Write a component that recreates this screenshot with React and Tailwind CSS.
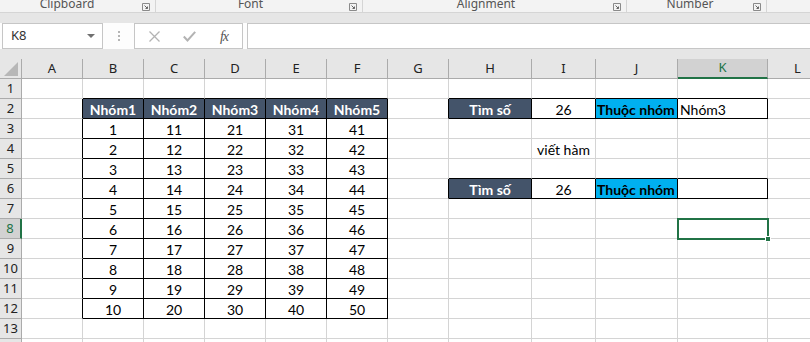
import React from 'react';

const COLS = [
  { name: 'A', w: 'w-[61px]' },
  { name: 'B', w: 'w-[61px]' },
  { name: 'C', w: 'w-[61px]' },
  { name: 'D', w: 'w-[61px]' },
  { name: 'E', w: 'w-[61px]' },
  { name: 'F', w: 'w-[61px]' },
  { name: 'G', w: 'w-[61px]' },
  { name: 'H', w: 'w-[83px]' },
  { name: 'I', w: 'w-[64px]' },
  { name: 'J', w: 'w-[82px]' },
  { name: 'K', w: 'w-[90px]' },
  { name: 'L', w: 'w-[60px]' },
];

const ROWS = [1, 2, 3, 4, 5, 6, 7, 8, 9, 10, 11, 12, 13, 14];

// nội dung các ô
const cells = {};
['B', 'C', 'D', 'E', 'F'].forEach((c, i) => {
  cells[c + 2] = { v: 'Nhóm' + (i + 1), head: true };
  for (let r = 3; r <= 12; r++) {
    cells[c + r] = { v: String(i * 10 + r - 2) };
  }
});
cells.H2 = { v: 'Tìm số', head: true };
cells.I2 = { v: '26' };
cells.J2 = { v: 'Thuộc nhóm', blue: true };
cells.K2 = { v: 'Nhóm3', left: true };
cells.I4 = { v: 'viết hàm', plain: true };
cells.H6 = { v: 'Tìm số', head: true };
cells.I6 = { v: '26' };
cells.J6 = { v: 'Thuộc nhóm', blue: true };
cells.K6 = { v: '', left: true };

const isBordered = (ci, r) => {
  if (ci < 0 || ci >= COLS.length) return false;
  if (ci >= 1 && ci <= 5 && r >= 2 && r <= 12) return true;
  if (ci >= 7 && ci <= 10 && (r === 2 || r === 6)) return true;
  return false;
};

function Launcher() {
  return (
    <svg width="8" height="8" viewBox="0 0 8 8" className="shrink-0">
      <path d="M0.5 0.5H7.5V7.5H0.5Z" fill="none" stroke="#8a8a8a" strokeWidth="1" />
      <path d="M2.5 2.5L5.5 5.5M5.5 3.5V5.5H3.5" fill="none" stroke="#666" strokeWidth="1" />
    </svg>
  );
}

function RibbonGroup({ label, w, pad }) {
  return (
    <div className={`${w} flex items-start h-[12px] border-r border-[#d5d5d5] pr-[5px]`}>
      <div className={`flex-1 text-center text-[12px] leading-[12px] -mt-[2px] text-[#555] ${pad}`}>{label}</div>
      <div className="mt-[3px]">
        <Launcher />
      </div>
    </div>
  );
}

function Cell({ ci, r }) {
  const col = COLS[ci];
  const key = col.name + r;
  const d = cells[key];
  const rightBlack = isBordered(ci, r) || isBordered(ci + 1, r);
  const bottomBlack = isBordered(ci, r) || isBordered(ci, r + 1);
  let cls = `${col.w} h-[20px] shrink-0 relative border-r border-b flex items-center `;
  cls += rightBlack ? 'border-r-black ' : 'border-r-[#d4d4d4] ';
  cls += bottomBlack ? 'border-b-black ' : 'border-b-[#d4d4d4] ';
  if (d && d.head) cls += 'bg-[#44546a] text-white font-bold justify-center ';
  else if (d && d.blue) cls += 'bg-[#00b0f0] text-black font-bold pl-[1px] ';
  else if (d && d.left) cls += 'text-black pl-[2px] ';
  else cls += 'text-black justify-center ';
  const selected = key === 'K8';
  return (
    <div className={cls}>
      {d && <span className="whitespace-nowrap leading-[19px] pt-[1px]">{d.v}</span>}
      {selected && (
        <div className="absolute z-10 -left-[1px] -top-[1px] w-[92px] h-[22px] border-2 border-[#217346]">
          <div className="absolute -right-[4px] -bottom-[4px] w-[6px] h-[6px] bg-[#217346] border border-white" />
        </div>
      )}
    </div>
  );
}

export default function App() {
  return (
    <div
      className="w-[810px] h-[342px] overflow-hidden bg-white"
      style={{ fontFamily: '"Noto Sans", "Open Sans", sans-serif' }}
    >
      {/* ribbon group labels */}
      <div className="h-[13px] bg-[#f3f3f3] border-b border-[#d5d5d5] flex overflow-hidden">
        <RibbonGroup label="Clipboard" w="w-[156px]" pad="pr-[8px]" />
        <RibbonGroup label="Font" w="w-[207px]" pad="pr-[4px]" />
        <RibbonGroup label="Alignment" w="w-[264px]" pad="pr-[4px]" />
        <RibbonGroup label="Number" w="w-[140px]" pad="" />
      </div>
      <div className="h-[10px] bg-[#e6e6e6]" />
      {/* formula bar */}
      <div className="h-[26px] bg-[#e6e6e6] flex items-stretch">
        <div className="w-[2px] bg-[#fdfdfd]" />
        <div className="w-[101px] bg-white border border-[#c6c6c6] flex items-center justify-between pl-[8px] pr-[7px]">
          <span className="text-[13px] text-[#333]">K8</span>
          <svg width="8" height="4" viewBox="0 0 8 4">
            <path d="M0 0H8L4 4Z" fill="#707070" />
          </svg>
        </div>
        <div className="w-[31px] bg-[#fdfdfd] flex items-center justify-center">
          <svg width="2" height="10" viewBox="0 0 2 10">
            <rect x="0" y="0" width="2" height="2" fill="#b5b5b5" />
            <rect x="0" y="4" width="2" height="2" fill="#b5b5b5" />
            <rect x="0" y="8" width="2" height="2" fill="#b5b5b5" />
          </svg>
        </div>
        <div className="w-[109px] bg-white border border-[#c6c6c6] flex items-center">
          <div className="w-[38px] flex justify-center">
            <svg width="11" height="11" viewBox="0 0 11 11">
              <path d="M0.5 0.5L10.5 10.5M10.5 0.5L0.5 10.5" stroke="#b3b3b3" strokeWidth="1.3" />
            </svg>
          </div>
          <div className="w-[33px] flex justify-center">
            <svg width="13" height="11" viewBox="0 0 13 11">
              <path d="M0.8 5.5L4.5 9.5L12.2 0.8" fill="none" stroke="#b3b3b3" strokeWidth="2" />
            </svg>
          </div>
          <div className="flex-1 flex justify-center">
            <span
              className="italic text-[14px] text-[#555] tracking-[-1px]"
              style={{ fontFamily: '"Liberation Serif", serif' }}
            >
              fx
            </span>
          </div>
        </div>
        <div className="w-[4px] bg-[#fdfdfd]" />
        <div className="flex-1 bg-white border-y border-l border-[#c6c6c6]" />
      </div>
      <div className="h-[10px] bg-[#e6e6e6]" />

      {/* column headers */}
      <div className="flex h-[20px]">
        <div className="w-[22px] shrink-0 bg-[#e6e6e6] border-r border-b border-[#ababab] relative">
          <svg width="14" height="14" viewBox="0 0 14 14" className="absolute right-[3px] bottom-[2px]">
            <path d="M14 0V14H0Z" fill="#b7b7b7" />
          </svg>
        </div>
        {COLS.map((c) =>
          c.name === 'K' ? (
            <div
              key={c.name}
              className={`${c.w} shrink-0 bg-[#d2d2d2] border-r border-[#ababab] border-b-2 border-b-[#217346] flex items-center justify-center text-[13px] text-[#217346]`}
            >
              {c.name}
            </div>
          ) : (
            <div
              key={c.name}
              className={`${c.w} shrink-0 bg-[#e6e6e6] border-r border-b border-[#ababab] flex items-center justify-center text-[13px] text-[#222]`}
            >
              {c.name}
            </div>
          )
        )}
      </div>

      {/* grid rows */}
      {ROWS.map((r) => (
        <div key={r} className="flex h-[20px]">
          {r === 8 ? (
            <div className="w-[22px] shrink-0 bg-[#d2d2d2] border-r-2 border-r-[#217346] border-b border-b-[#ababab] flex items-center justify-center text-[13px] text-[#217346]">
              {r}
            </div>
          ) : (
            <div className="w-[22px] shrink-0 bg-[#e6e6e6] border-r border-b border-[#ababab] flex items-center justify-center text-[13px] text-[#222]">
              {r}
            </div>
          )}
          <div className="flex text-[14px]" style={{ fontFamily: 'Lato, "Noto Sans", sans-serif' }}>
            {COLS.map((c, ci) => (
              <Cell key={c.name} ci={ci} r={r} />
            ))}
          </div>
        </div>
      ))}
    </div>
  );
}
